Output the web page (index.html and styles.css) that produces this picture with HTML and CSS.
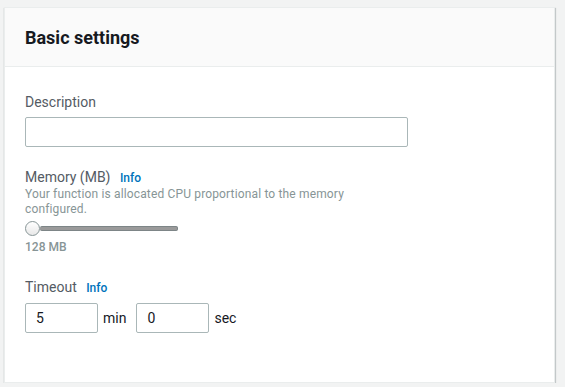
FILE: index.html
```html
<!DOCTYPE html>
<html lang="en">
<head>
  <meta charset="UTF-8">
  <meta name="viewport" content="width=device-width, initial-scale=1.0">
  <title>Basic settings</title>
  <link rel="stylesheet" href="styles.css">
</head>
<body>
  <!-- Basic settings panel -->
  <div class="panel">
    <div class="panel-header">
      <h2>Basic settings</h2>
    </div>

    <div class="panel-body">
      <div class="field">
        <label class="label" for="description">Description</label>
        <input class="text-input wide" id="description" type="text">
      </div>

      <div class="field memory">
        <div class="label">Memory (MB) <a class="info" href="#">Info</a></div>
        <div class="hint">Your function is allocated CPU proportional to the memory<br>configured.</div>
        <div class="slider">
          <div class="thumb"></div>
          <div class="track"></div>
        </div>
        <div class="value">128 MB</div>
      </div>

      <div class="field timeout">
        <div class="label">Timeout <a class="info" href="#">Info</a></div>
        <div class="time-row">
          <input class="text-input short" type="text" value="5">
          <span class="unit">min</span>
          <input class="text-input short" type="text" value="0">
          <span class="unit">sec</span>
        </div>
      </div>
    </div>
  </div>
</body>
</html>
```

FILE: styles.css
```css
body {
  margin: 0;
  background-color: #f2f3f3;
  font-family: 'Roboto', 'Liberation Sans', sans-serif;
  color: #16191f;
}

/* Panel */
.panel {
  margin: 7px 0 0 4px;
  width: 549px;
  background-color: #fff;
  border: 1px solid #eaeded;
  box-shadow: 0 1px 1px 0 rgba(0, 28, 36, 0.3), 1px 1px 1px 0 rgba(0, 28, 36, 0.15);
}

.panel-header {
  background-color: #fafafa;
  border-bottom: 1px solid #eaeded;
  padding: 19px 20px 17px;
}

.panel-header h2 {
  margin: 0;
  font-size: 18px;
  line-height: 22px;
  font-weight: 700;
}

.panel-body {
  padding: 25px 20px 49px;
}

.label {
  display: block;
  font-size: 14px;
  line-height: 20px;
  color: #545b64;
}

.info {
  margin-left: 6px;
  font-size: 12px;
  font-weight: 500;
  color: #0073bb;
  text-decoration: none;
}

.text-input {
  box-sizing: border-box;
  height: 30px;
  border: 1px solid #aab7b8;
  border-radius: 2px;
  padding: 0 10px;
  font-family: inherit;
  font-size: 14px;
  color: #16191f;
  outline: none;
}

.wide {
  display: block;
  margin-top: 5px;
  width: 383px;
}

/* Memory */
.memory {
  margin-top: 21px;
}

.memory .label {
  line-height: 18px;
}

.hint {
  font-size: 12px;
  line-height: 15px;
  letter-spacing: 0.15px;
  color: #879596;
}

.slider {
  display: flex;
  align-items: center;
  margin-top: 4px;
  width: 153px;
  height: 14px;
}

.thumb {
  box-sizing: border-box;
  width: 15px;
  height: 15px;
  border-radius: 50%;
  border: 1px solid #879596;
  background: linear-gradient(#fff, #e8e8e8);
  flex-shrink: 0;
}

.track {
  flex: 1;
  height: 3px;
  border-radius: 2px;
  background-color: #9a9a9a;
  border: 1px solid #7d8587;
  border-left: none;
}

.value {
  margin-top: 5px;
  font-size: 12px;
  line-height: 15px;
  font-weight: 500;
  color: #879596;
}

/* Timeout */
.timeout {
  margin-top: 23px;
}

.timeout .label {
  line-height: 18px;
}

.time-row {
  display: flex;
  align-items: center;
  margin-top: 6px;
}

.short {
  width: 73px;
}

.unit {
  margin: 0 10px 0 5px;
  font-size: 14px;
  color: #16191f;
}
```
